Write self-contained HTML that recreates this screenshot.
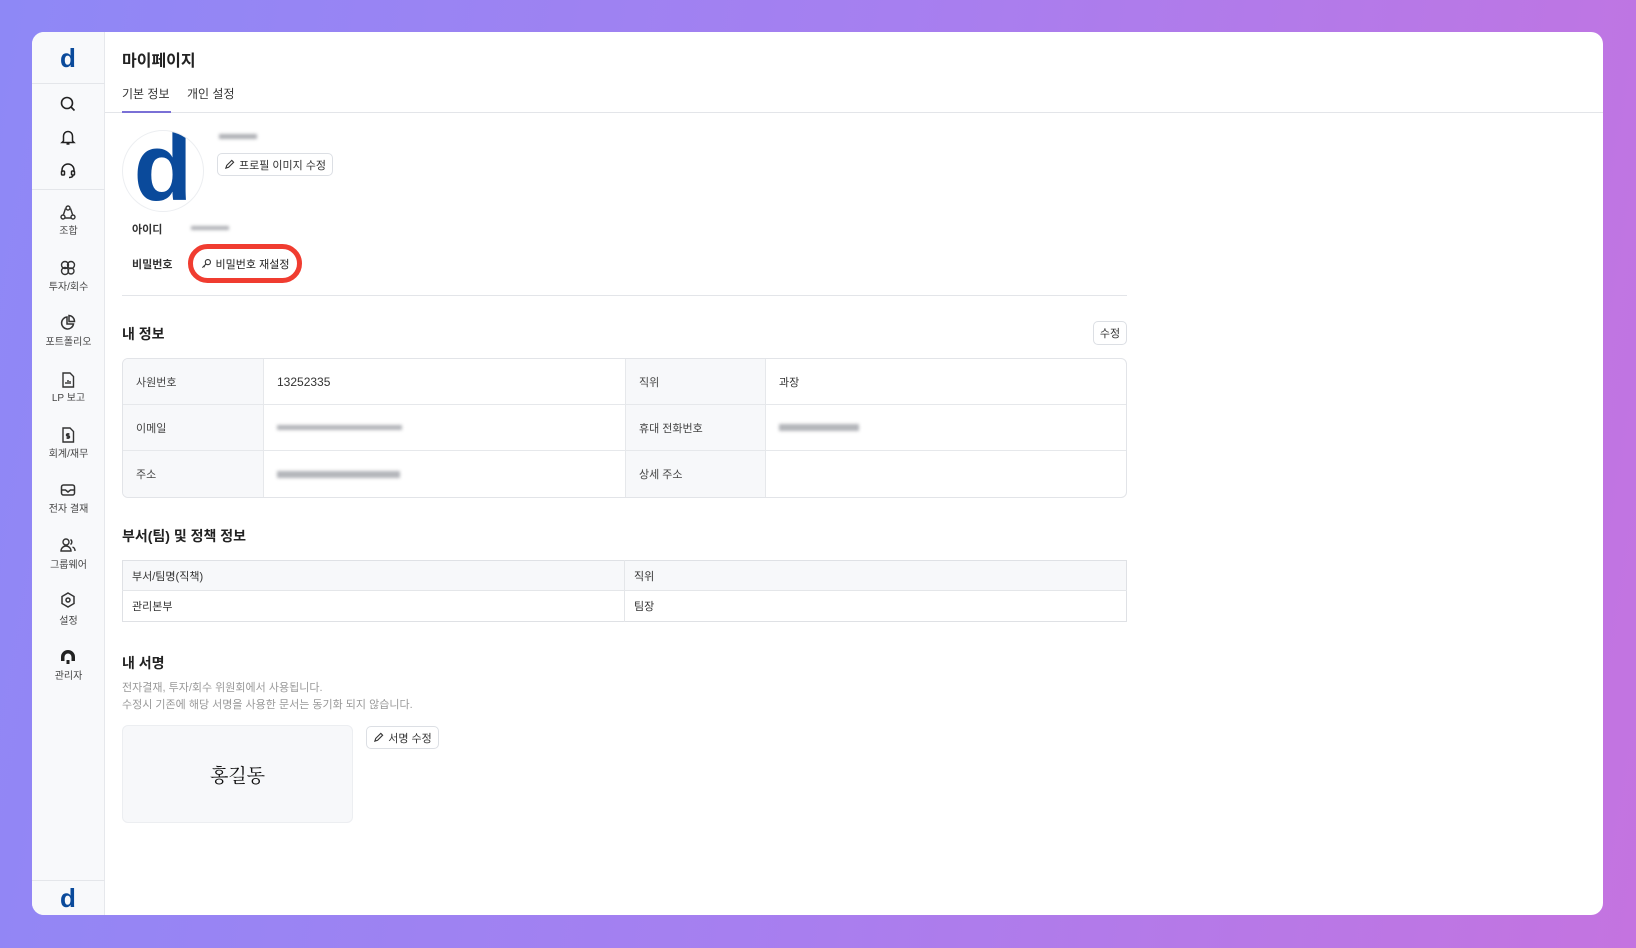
<!DOCTYPE html>
<html><head><meta charset="utf-8">
<style>
*{margin:0;padding:0;box-sizing:border-box}
body{width:1636px;height:948px;overflow:hidden;background:linear-gradient(100deg,#8e88f6 0%,#a67ff0 50%,#c473e0 100%);font-family:"Liberation Sans","Noto Sans CJK KR",sans-serif;color:#222;position:relative}
.card{position:absolute;left:32px;top:32px;width:1571px;height:883px;background:#fff;border-radius:12px;overflow:hidden}
.side{position:absolute;left:0;top:0;width:73px;height:100%;background:#f8f9fb;border-right:1px solid #e6e8ec}
.hr{position:absolute;left:0;width:73px;height:1px;background:#e4e6ea}
.ic{position:absolute;left:26px;width:20px;height:20px}
.lbl{position:absolute;left:0;width:73px;text-align:center;font-size:10px;color:#444;line-height:12px}
.logo{position:absolute;left:22px;width:28px;text-align:center;font-weight:bold;color:#0a4a9b;font-size:26px;line-height:28px}
.abs{position:absolute}
.btn{position:absolute;border:1px solid #dcdfe4;border-radius:5px;background:#fff;font-size:11px;color:#333;display:flex;align-items:center;justify-content:center;gap:4px}
.blur{position:absolute;background:#9a9ca2;filter:blur(1.6px);height:5px;opacity:.8}
table{border-collapse:collapse}
.t1{position:absolute;left:90px;top:326px;width:1005px;border:1px solid #e2e4e8;border-radius:6px;overflow:hidden;border-collapse:separate;border-spacing:0}
.t1 td{border-right:1px solid #e6e8eb;border-bottom:1px solid #e6e8eb;height:46px;font-size:11px;color:#333;padding-left:13px}
.t1 tr:last-child td{border-bottom:none}
.t1 td:last-child{border-right:none}
.t1 .k{background:#f7f8fa;color:#444}
.t2{position:absolute;left:90px;top:528px;width:1005px;border:1px solid #dfe1e5}
.t2 td{border-right:1px solid #e4e6e9;border-bottom:1px solid #e4e6e9;font-size:11px;color:#333;padding-left:9px}
.t2 td:last-child{border-right:none}
h3{position:absolute;font-size:14px;font-weight:bold;color:#222}
</style></head><body>
<div class="card">
 <div class="side">
  <div class="logo" style="top:12px">d</div>
  <div class="hr" style="top:51px"></div>
  <svg class="ic" style="top:62px" viewBox="0 0 20 20" fill="none" stroke="#222" stroke-width="1.6"><circle cx="9" cy="9" r="5.5"/><path d="M13 13l3.5 3.5"/></svg>
  <svg class="ic" style="top:95px" viewBox="0 0 20 20" fill="none" stroke="#222" stroke-width="1.5"><path d="M5.5 14V9a4.5 4.5 0 019 0v5l1.5 1.5H4L5.5 14zM8.5 17h3"/></svg>
  <svg class="ic" style="top:128px" viewBox="0 0 20 20" fill="none" stroke="#222" stroke-width="1.5"><path d="M4 12V10a6 6 0 0112 0v2"/><rect x="3.5" y="11" width="3" height="4" rx="1"/><rect x="13.5" y="11" width="3" height="4" rx="1"/><path d="M15 15c0 2-2 2.5-4 2.5"/></svg>
  <div class="hr" style="top:157px"></div>
  <svg class="ic" style="top:171px" viewBox="0 0 20 20" fill="none" stroke="#333" stroke-width="1.4"><circle cx="10" cy="5" r="2"/><circle cx="5" cy="14" r="2"/><circle cx="15" cy="14" r="2"/><path d="M7.5 5.5L5.5 11.5M12.5 5.5l2 6M7 15h6"/></svg>
  <div class="lbl" style="top:194px">조합</div>
  <svg class="ic" style="top:226px" viewBox="0 0 20 20" fill="none" stroke="#333" stroke-width="1.4"><circle cx="7" cy="7" r="3.5"/><circle cx="13" cy="7" r="3.5"/><circle cx="7" cy="13" r="3.5"/><circle cx="13" cy="13" r="3"/></svg>
  <div class="lbl" style="top:250px">투자/회수</div>
  <svg class="ic" style="top:281px" viewBox="0 0 20 20" fill="none" stroke="#333" stroke-width="1.5"><path d="M9 4a6 6 0 106.5 7H9z"/><path d="M11 2.5a6 6 0 015.5 6H11z"/></svg>
  <div class="lbl" style="top:305px">포트폴리오</div>
  <svg class="ic" style="top:338px" viewBox="0 0 20 20" fill="none" stroke="#333" stroke-width="1.4"><path d="M5 3h7l3.5 3.5V17H5z"/><path d="M8 14v-2M10 14v-4M12 14v-3"/></svg>
  <div class="lbl" style="top:361px">LP 보고</div>
  <svg class="ic" style="top:393px" viewBox="0 0 20 20" fill="none" stroke="#333" stroke-width="1.4"><path d="M5 3h7l3.5 3.5V17H5z"/><path d="M11.5 9h-2a1 1 0 000 2h1a1 1 0 010 2h-2M10 8v6"/></svg>
  <div class="lbl" style="top:417px">회계/재무</div>
  <svg class="ic" style="top:448px" viewBox="0 0 20 20" fill="none" stroke="#333" stroke-width="1.5"><rect x="3.5" y="5" width="13" height="10" rx="2"/><path d="M3.5 10h4l2.5 2 2.5-2h4"/></svg>
  <div class="lbl" style="top:472px">전자 결재</div>
  <svg class="ic" style="top:503px" viewBox="0 0 20 20" fill="none" stroke="#333" stroke-width="1.4"><circle cx="8" cy="7" r="3"/><path d="M3 16a5 5 0 0110 0z"/><path d="M12.5 4.5a3 3 0 010 5M14.5 12a4 4 0 012.5 4"/></svg>
  <div class="lbl" style="top:528px">그룹웨어</div>
  <svg class="ic" style="top:558px" viewBox="0 0 20 20" fill="none" stroke="#333" stroke-width="1.5"><path d="M10 3l6 3.5v7L10 17l-6-3.5v-7z"/><circle cx="10" cy="10" r="2"/></svg>
  <div class="lbl" style="top:584px">설정</div>
  <svg class="ic" style="top:615px" viewBox="0 0 20 20"><path d="M10 3a7 7 0 00-7 7v4h3.5v-4a3.5 3.5 0 017 0v4H17v-4a7 7 0 00-7-7z" fill="#222"/><rect x="8.5" y="13" width="3" height="4" fill="#222"/></svg>
  <div class="lbl" style="top:639px">관리자</div>
  <div class="hr" style="top:848px"></div>
  <div class="logo" style="top:852px">d</div>
 </div>
 <div class="abs" style="left:90px;top:15px;font-size:16px;font-weight:bold">마이페이지</div>
 <div class="abs" style="left:90px;top:53px;font-size:12px;color:#333">기본 정보</div>
 <div class="abs" style="left:155px;top:53px;font-size:12px;color:#333">개인 설정</div>
 <div class="abs" style="left:73px;top:80px;width:1498px;height:1px;background:#e3e5e9"></div>
 <div class="abs" style="left:90px;top:79px;width:49px;height:2px;background:#7a70d6"></div>
 <div class="abs" style="left:90px;top:98px;width:82px;height:82px;border-radius:50%;border:1px solid #eceef1;overflow:hidden;text-align:center;font-weight:bold;color:#0a4a9b;font-size:96px;line-height:74px;font-family:'Liberation Sans',sans-serif">d</div>
 <div class="blur" style="left:187px;top:102px;width:38px"></div>
 <div class="btn" style="left:185px;top:121px;width:116px;height:23px"><svg width="11" height="11" viewBox="0 0 12 12" fill="none" stroke="#333" stroke-width="1.2"><path d="M2 10l1-3 5.5-5.5 2 2L5 9z"/></svg>프로필 이미지 수정</div>
 <div class="abs" style="left:100px;top:189px;font-size:11px;font-weight:bold;color:#333">아이디</div>
 <div class="blur" style="left:159px;top:194px;width:38px;height:4px"></div>
 <div class="abs" style="left:100px;top:224px;font-size:11px;font-weight:bold;color:#333">비밀번호</div>
 <div class="abs" style="left:156px;top:212px;width:114px;height:39px;border:5px solid #f03c30;border-radius:20px;background:#fff;display:flex;align-items:center;justify-content:center;gap:4px;font-size:11px;color:#222"><svg width="11" height="11" viewBox="0 0 12 12" fill="none" stroke="#333" stroke-width="1.2"><circle cx="7.5" cy="4.5" r="2.8"/><path d="M5.5 6.5L1.5 10.5M3 9l1 1"/></svg>비밀번호 재설정</div>
 <div class="abs" style="left:90px;top:263px;width:1005px;height:1px;background:#e3e5e9"></div>
 <h3 style="left:90px;top:292px">내 정보</h3>
 <div class="btn" style="left:1061px;top:289px;width:34px;height:24px">수정</div>
 <table class="t1">
  <tr><td class="k" style="width:141px">사원번호</td><td style="width:362px;font-size:12px">13252335</td><td class="k" style="width:140px">직위</td><td>과장</td></tr>
  <tr><td class="k">이메일</td><td><div style="width:125px;height:5px;background:#a0a2a8;filter:blur(1.6px);opacity:.8"></div></td><td class="k">휴대 전화번호</td><td><div style="width:80px;height:7px;background:#a0a2a8;filter:blur(1.6px);opacity:.8"></div></td></tr>
  <tr><td class="k">주소</td><td><div style="width:123px;height:7px;background:#a0a2a8;filter:blur(1.6px);opacity:.8"></div></td><td class="k">상세 주소</td><td></td></tr>
 </table>
 <h3 style="left:90px;top:494px">부서(팀) 및 정책 정보</h3>
 <table class="t2">
  <tr style="background:#f7f8fa"><td style="width:502px;height:30px">부서/팀명(직책)</td><td>직위</td></tr>
  <tr><td style="height:31px;border-bottom:none">관리본부</td><td style="border-bottom:none">팀장</td></tr>
 </table>
 <h3 style="left:90px;top:621px">내 서명</h3>
 <div class="abs" style="left:90px;top:648px;font-size:11px;color:#999;line-height:17px">전자결재, 투자/회수 위원회에서 사용됩니다.<br>수정시 기존에 해당 서명을 사용한 문서는 동기화 되지 않습니다.</div>
 <div class="abs" style="left:90px;top:693px;width:231px;height:98px;background:#f7f8fa;border:1px solid #eceef1;border-radius:6px;text-align:center;line-height:98px;font-size:19px;font-family:'Noto Serif CJK SC',serif;color:#111">홍길동</div>
 <div class="btn" style="left:334px;top:694px;width:73px;height:23px"><svg width="11" height="11" viewBox="0 0 12 12" fill="none" stroke="#333" stroke-width="1.2"><path d="M2 10l1-3 5.5-5.5 2 2L5 9z"/></svg>서명 수정</div>
</div>
</body></html>
